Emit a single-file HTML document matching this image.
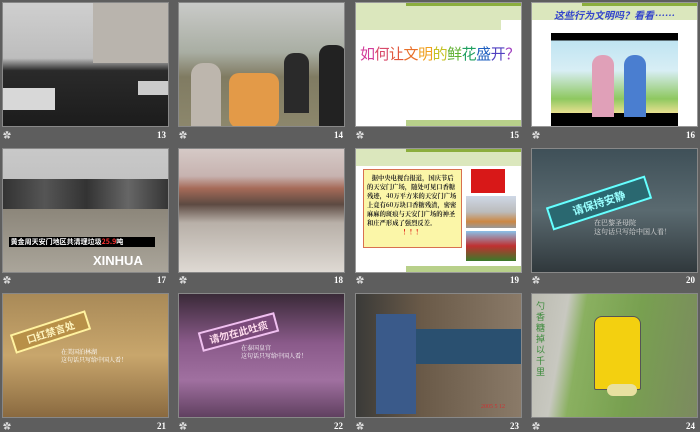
<!DOCTYPE html><html><head><meta charset="utf-8"><style>
body{margin:0;width:700px;height:432px;background:#5e5e5e;position:relative;overflow:hidden;font-family:"Liberation Serif","Noto Serif CJK SC",serif}
.t{position:absolute;width:167px;height:125px;box-sizing:border-box;border:1px solid #888;overflow:hidden}
.n{position:absolute;color:#fff;font-size:9px;font-weight:bold}
.s{position:absolute;color:#ddd;font-size:8px}
.ab{position:absolute}
</style></head><body>
<!-- row1 -->
<div class="t" style="left:2px;top:2px;background:linear-gradient(#cfcfcf 0,#bdbdbd 45%,#2a2a2a 55%,#1c1c1c 100%)">
<div class="ab" style="left:90px;top:0;width:77px;height:60px;background:#b9b4ad"></div>
<div class="ab" style="left:0;top:85px;width:52px;height:22px;background:#d8d8d8"></div>
<div class="ab" style="left:135px;top:78px;width:32px;height:14px;background:#ccc"></div></div>
<div class="t" style="left:178px;top:2px;background:linear-gradient(#c9cac8 0,#a9aea3 40%,#807b62 60%,#8c876c 100%)">
<div class="ab" style="left:12px;top:60px;width:30px;height:65px;background:#bdb6ad;border-radius:12px 12px 0 0"></div>
<div class="ab" style="left:50px;top:70px;width:50px;height:55px;background:#e39a48;border-radius:10px"></div>
<div class="ab" style="left:105px;top:50px;width:25px;height:60px;background:#2a2a2a;border-radius:10px 10px 0 0"></div>
<div class="ab" style="left:140px;top:42px;width:27px;height:83px;background:#222;border-radius:10px 10px 0 0"></div></div>
<div class="t" style="left:355px;top:2px;background:#fff;border-color:#999">
<div class="ab" style="left:0;top:0;width:167px;height:17px;background:#dbe7bd"></div>
<div class="ab" style="left:0;top:17px;width:145px;height:10px;background:#dbe7bd"></div>
<div class="ab" style="left:50px;top:0;width:117px;height:3px;background:#8cae3d"></div>
<div class="ab" style="left:50px;top:117px;width:117px;height:6px;background:#b8d08a"></div>
<div class="ab" style="left:4px;top:40px;font-size:15px;white-space:nowrap;font-family:'Noto Sans CJK SC',sans-serif;letter-spacing:-0.5px"><span style="color:#d23c9a">如</span><span style="color:#d84a6a">何</span><span style="color:#e0543a">让</span><span style="color:#e8702a">文</span><span style="color:#f0a020">明</span><span style="color:#c4c020">的</span><span style="color:#60b030">鲜</span><span style="color:#20a060">花</span><span style="color:#2060c0">盛</span><span style="color:#5040c0">开</span><span style="color:#a040c0">？</span></div></div>
<div class="t" style="left:531px;top:2px;background:#fff;border-color:#999">
<div class="ab" style="left:0;top:0;width:167px;height:17px;background:#dbe7bd"></div>
<div class="ab" style="left:50px;top:0;width:117px;height:3px;background:#8cae3d"></div>
<div class="ab" style="left:22px;top:4px;font-size:10px;color:#3344cc;font-style:italic;font-weight:bold;font-family:'Noto Sans CJK SC',sans-serif">这些行为文明吗？看看……</div>
<div class="ab" style="left:19px;top:30px;width:127px;height:94px;background:linear-gradient(#000 0,#000 8%,#bfe4f2 8%,#d8eef5 40%,#8ec860 70%,#e8e090 85%,#000 85%)"></div>
<div class="ab" style="left:60px;top:52px;width:22px;height:62px;background:#e0a0b8;border-radius:10px 10px 0 0"></div>
<div class="ab" style="left:92px;top:52px;width:22px;height:62px;background:#4a7ed0;border-radius:10px 10px 0 0"></div></div>
<div class="s" style="left:3px;top:130px">✿</div><div class="n" style="left:157px;top:130px">13</div>
<div class="s" style="left:179px;top:130px">✿</div><div class="n" style="left:334px;top:130px">14</div>
<div class="s" style="left:356px;top:130px">✿</div><div class="n" style="left:510px;top:130px">15</div>
<div class="s" style="left:532px;top:130px">✿</div><div class="n" style="left:686px;top:130px">16</div>
<!-- row2 -->
<div class="t" style="left:2px;top:148px;background:linear-gradient(#c8c8c8 0,#c0c0c0 35%,#8a8478 45%,#aaa59a 100%)">
<div class="ab" style="left:0;top:30px;width:167px;height:30px;background:linear-gradient(90deg,#333,#555,#333,#666,#333)"></div>
<div class="ab" style="left:6px;top:88px;width:146px;height:10px;background:#000;color:#fff;font-size:7px;line-height:10px;font-weight:bold;font-family:'Noto Sans CJK SC',sans-serif;white-space:nowrap">&nbsp;黄金周天安门地区共清理垃圾<span style="color:#f33">25.9</span>吨</div>
<div class="ab" style="left:90px;top:104px;color:#fff;font-size:13px;font-weight:bold;font-family:'Liberation Sans',sans-serif">XINHUA</div></div>
<div class="t" style="left:178px;top:148px;background:linear-gradient(#d5c9c6 0,#c7b3b0 22%,#a66a58 32%,#5d4a42 45%,#b8b0a8 60%,#ded9d3 100%)"></div>
<div class="t" style="left:355px;top:148px;background:#fff;border-color:#999">
<div class="ab" style="left:0;top:0;width:167px;height:17px;background:#dbe7bd"></div>
<div class="ab" style="left:50px;top:0;width:117px;height:3px;background:#8cae3d"></div>
<div class="ab" style="left:50px;top:117px;width:117px;height:6px;background:#b8d08a"></div>
<div class="ab" style="left:7px;top:20px;width:99px;height:79px;background:#fbf6a8;border:1px solid #d87050;font-size:6.3px;line-height:9px;font-weight:bold;color:#222;padding:3px;box-sizing:border-box;font-family:'Noto Serif CJK SC',serif">&nbsp;&nbsp;&nbsp;据中央电视台报道，国庆节后的天安门广场，随处可见口香糖残迹，40万平方米的天安门广场上竟有60万块口香糖残渣，密密麻麻的斑痕与天安门广场的神圣和庄严形成了强烈反差。<div style="color:#d00;text-align:center">！！！</div></div>
<div class="ab" style="left:115px;top:20px;width:34px;height:24px;background:#d81818"></div>
<div class="ab" style="left:110px;top:47px;width:50px;height:32px;background:linear-gradient(#cfd8e6,#bbb 50%,#c84 80%,#999)"></div>
<div class="ab" style="left:110px;top:82px;width:50px;height:30px;background:linear-gradient(#8ac0e8,#c03030 50%,#3a7a2a)"></div></div>
<div class="t" style="left:531px;top:148px;background:linear-gradient(#3f5058,#5a6a70 50%,#30383c)">
<div class="ab" style="left:15px;top:42px;width:100px;height:20px;background:#2a6870;border:2px solid #6ff;transform:rotate(-18deg);color:#9ff;font-size:11px;font-weight:bold;text-align:center;line-height:20px;font-family:'Noto Sans CJK SC',sans-serif">请保持安静</div>
<div class="ab" style="left:62px;top:70px;color:#ddd;font-size:7px;line-height:9px;font-family:'Noto Serif CJK SC',serif">在巴黎圣母院<br>这句话只写给中国人看！</div></div>
<div class="s" style="left:3px;top:275px">✿</div><div class="n" style="left:157px;top:275px">17</div>
<div class="s" style="left:179px;top:275px">✿</div><div class="n" style="left:334px;top:275px">18</div>
<div class="s" style="left:356px;top:275px">✿</div><div class="n" style="left:510px;top:275px">19</div>
<div class="s" style="left:532px;top:275px">✿</div><div class="n" style="left:686px;top:275px">20</div>
<!-- row3 -->
<div class="t" style="left:2px;top:293px;background:linear-gradient(#a98a58,#c8a66c 50%,#8a6a40)">
<div class="ab" style="left:8px;top:28px;width:75px;height:16px;background:#b89048;border:2px solid #fff2a0;transform:rotate(-18deg);color:#fff5c0;font-size:10px;font-weight:bold;text-align:center;line-height:16px;font-family:'Noto Sans CJK SC',sans-serif">口红禁言处</div>
<div class="ab" style="left:58px;top:54px;color:#fff;font-size:6px;line-height:8px;font-family:'Noto Serif CJK SC',serif">在美国泊林湖<br>这句话只写给中国人看！</div></div>
<div class="t" style="left:178px;top:293px;background:linear-gradient(#3a2a38,#8a5a8a 40%,#a070a0 70%,#604060)">
<div class="ab" style="left:20px;top:28px;width:75px;height:16px;background:#7a4a7a;border:2px solid #f0c0f0;transform:rotate(-15deg);color:#fde;font-size:10px;font-weight:bold;text-align:center;line-height:16px;font-family:'Noto Sans CJK SC',sans-serif">请勿在此吐痰</div>
<div class="ab" style="left:62px;top:50px;color:#fff;font-size:6px;line-height:8px;font-family:'Noto Serif CJK SC',serif">在泰国皇宫<br>这句话只写给中国人看！</div></div>
<div class="t" style="left:355px;top:293px;background:linear-gradient(90deg,#3a3a38,#6a5a48 40%,#8a7a68)">
<div class="ab" style="left:20px;top:20px;width:40px;height:100px;background:#3a5a8a"></div>
<div class="ab" style="left:60px;top:35px;width:107px;height:35px;background:#2a5070"></div>
<div class="ab" style="left:125px;top:110px;color:#c33;font-size:6px">2005 5 12</div></div>
<div class="t" style="left:531px;top:293px;background:linear-gradient(100deg,#bbbbb0 0,#c8c8c0 20%,#8ab060 30%,#78a050 60%,#7c8a60 100%)">
<div class="ab" style="left:62px;top:22px;width:45px;height:72px;background:#f3d010;border-radius:8px 8px 2px 2px;border:1px solid #555"></div>
<div class="ab" style="left:4px;top:6px;color:#3a8a3a;font-size:9px;width:10px;line-height:11px;font-family:'Noto Sans CJK SC',sans-serif">勺香糖掉以千里</div>
<div class="ab" style="left:75px;top:90px;width:30px;height:12px;background:#e8e0a0;border-radius:6px"></div></div>
<div class="s" style="left:3px;top:421px">✿</div><div class="n" style="left:157px;top:421px">21</div>
<div class="s" style="left:179px;top:421px">✿</div><div class="n" style="left:334px;top:421px">22</div>
<div class="s" style="left:356px;top:421px">✿</div><div class="n" style="left:510px;top:421px">23</div>
<div class="s" style="left:532px;top:421px">✿</div><div class="n" style="left:686px;top:421px">24</div>
</body></html>
